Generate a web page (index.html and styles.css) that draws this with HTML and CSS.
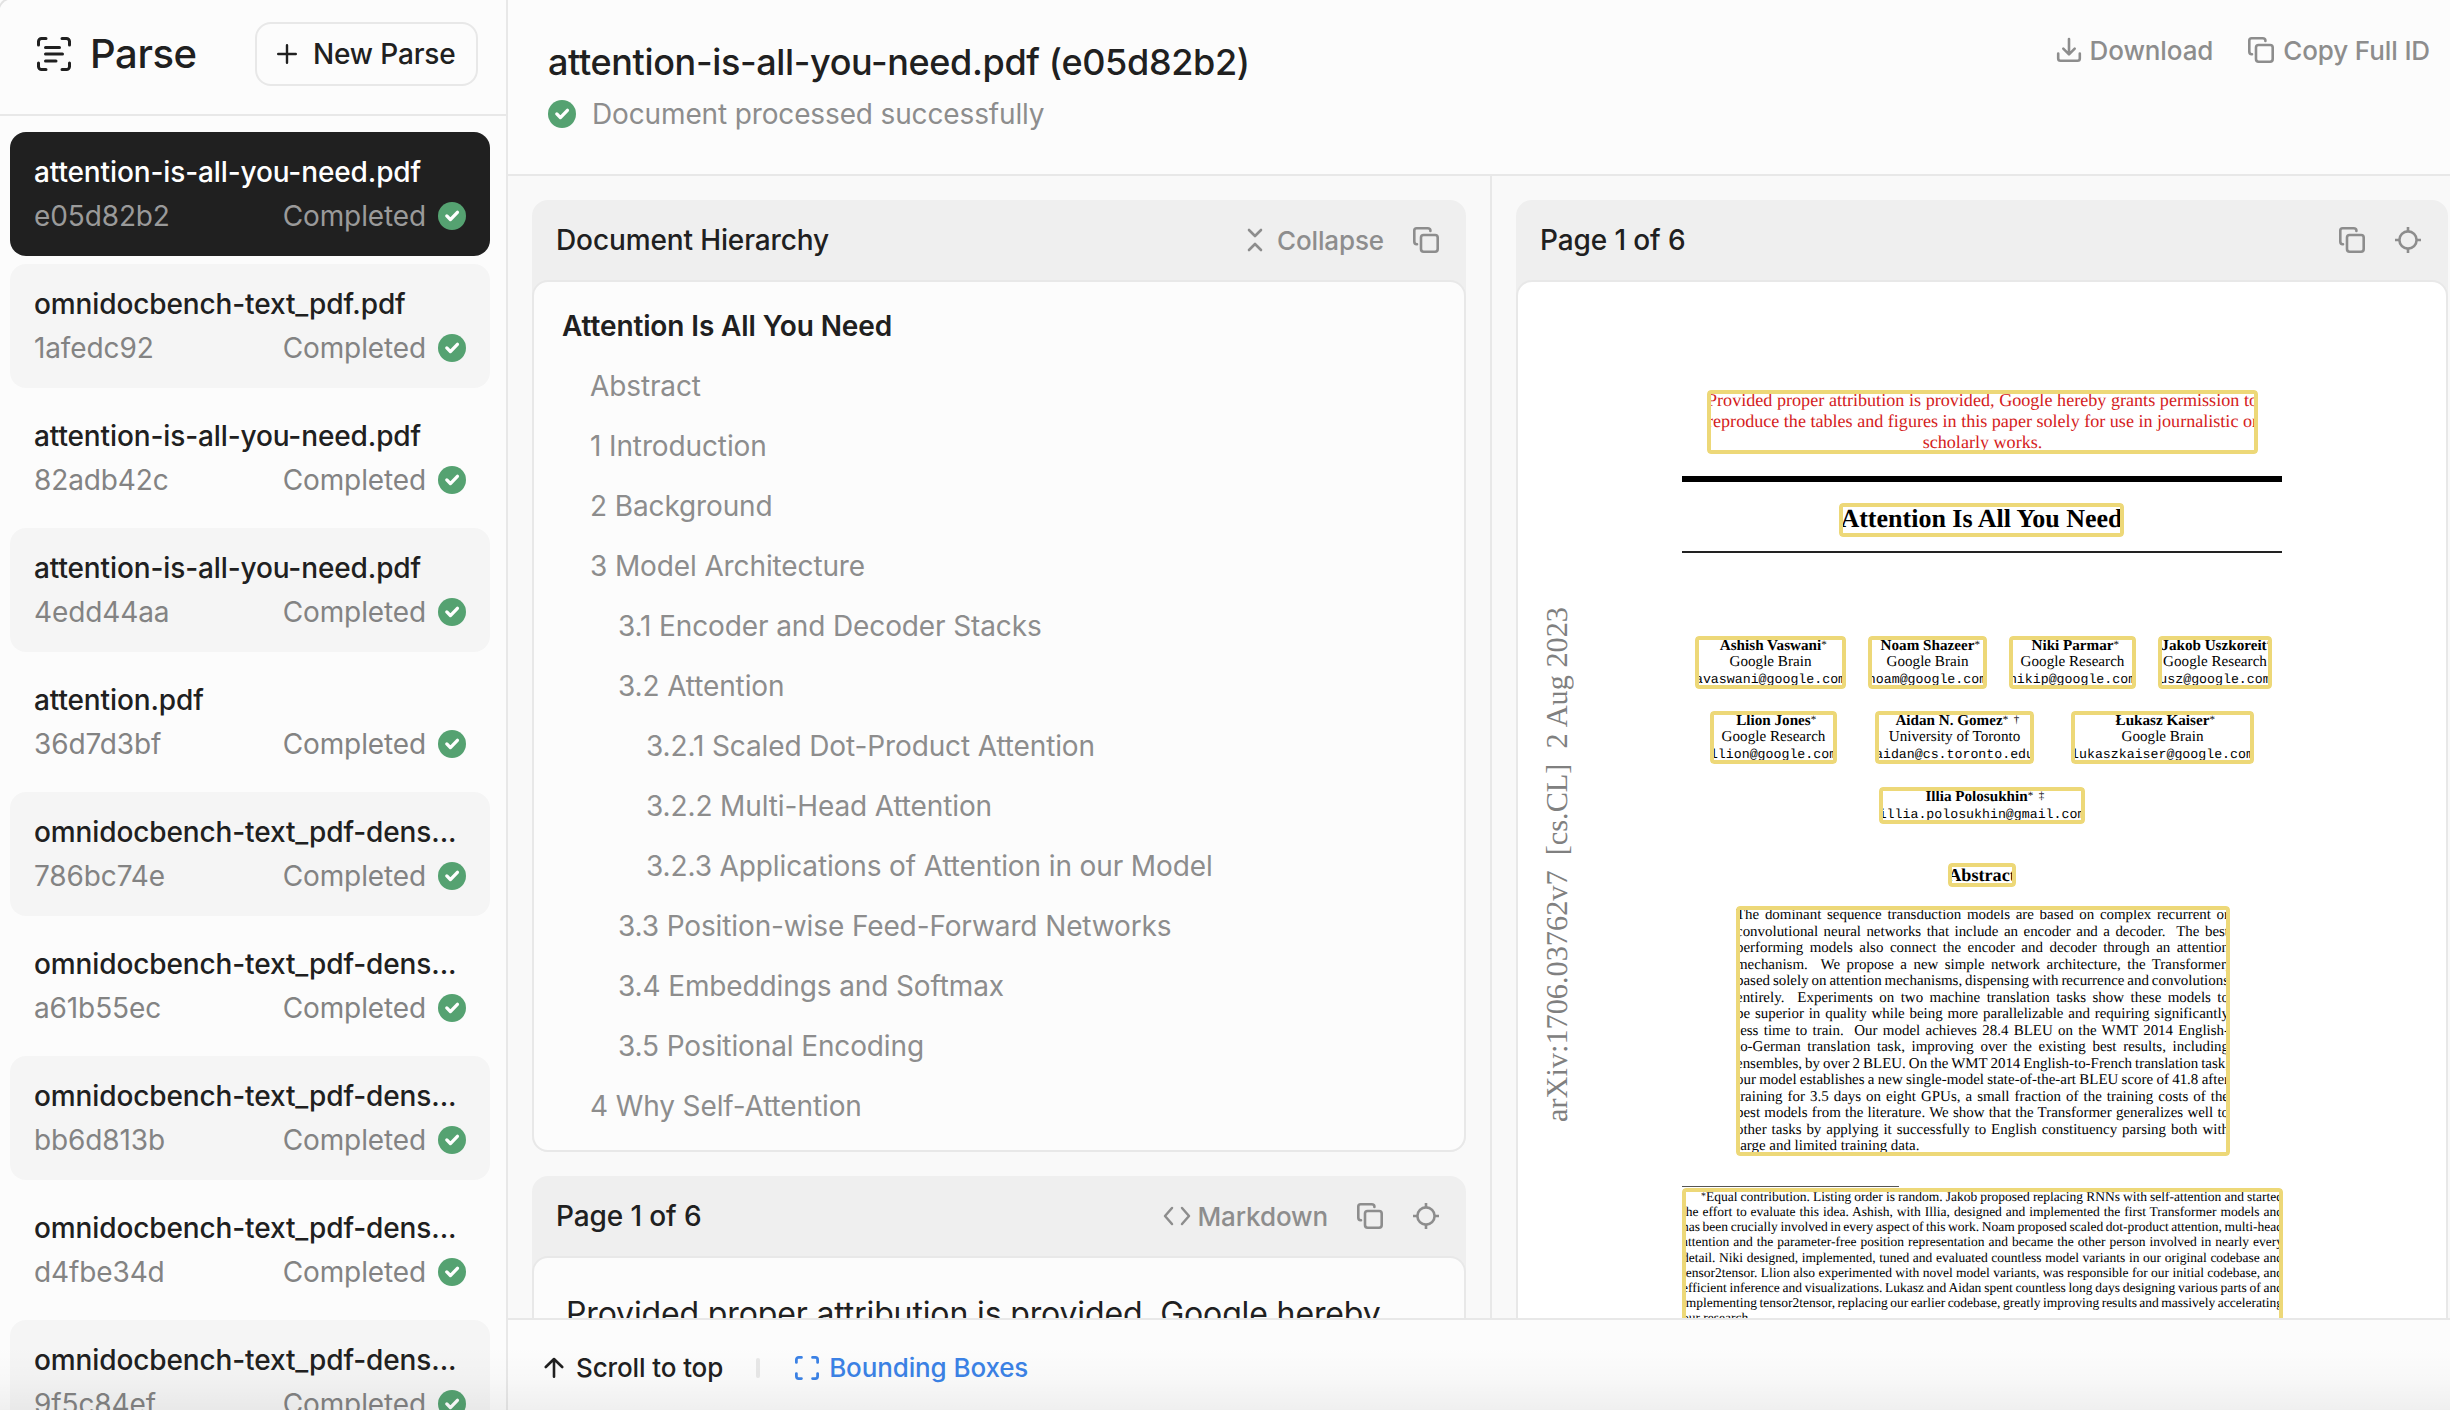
FILE: index.html
```html
<!DOCTYPE html>
<html lang="en">
<head>
<meta charset="utf-8">
<title>Parse</title>
<link rel="stylesheet" href="styles.css">
</head>
<body>
<svg class="defs" width="0" height="0" aria-hidden="true">
  <symbol id="i-check" viewBox="0 0 28 28"><circle cx="14" cy="14" r="14" fill="#55a271"/><path d="M8.8 13.9l3.6 3.7 7-7.3" fill="none" stroke="#fff" stroke-width="3.3" stroke-linecap="round" stroke-linejoin="round"/></symbol>
  <symbol id="i-copy" viewBox="0 0 28 28"><g fill="none" stroke="currentColor" stroke-width="2.6" stroke-linecap="round" stroke-linejoin="round"><rect x="9" y="9" width="16.7" height="16.700" rx="2.6"/><path d="M5 18.200H4.600C3.200 18.200 2.300 17.300 2.300 15.600V4.600C2.300 3.200 3.200 2.300 4.600 2.300h11C17.200 2.300 18.400 3.200 18.400 4.600v.4"/></g></symbol>
  <symbol id="i-target" viewBox="0 0 28 28"><g fill="none" stroke="currentColor" stroke-width="2.6"><circle cx="14" cy="14" r="8.600"/><path d="M14 1v4.300M14 22.700V27M1 14h4.300M22.700 14H27"/></g></symbol>
</svg>
<div class="app">
  <aside class="sidebar">
    <div class="side-head">
      <svg class="logo" viewBox="0 0 36 36"><g fill="none" stroke="#202020" stroke-width="3" stroke-linecap="round" stroke-linejoin="round"><path d="M2.500 9V5.500a3 3 0 0 1 3-3H10M26 2.500h4.500a3 3 0 0 1 3 3V9M33.500 27v3.500a3 3 0 0 1-3 3H26M10 33.500H5.500a3 3 0 0 1-3-3V27"/><path d="M9.500 11.500h14M9.500 18h17M9.500 25h10.500"/></g></svg>
      <h1>Parse</h1>
      <button class="new"><svg viewBox="0 0 20 20"><path d="M10 1.200v17.600M1.200 10h17.600" stroke="#202020" stroke-width="2.400" stroke-linecap="round"/></svg>New Parse</button>
    </div>
    <ul class="jobs">
      <li class="active"><b>attention-is-all-you-need.pdf</b><div><span>e05d82b2</span><span class="st">Completed</span><svg><use href="#i-check"/></svg></div></li>
      <li class="alt"><b>omnidocbench-text_pdf.pdf</b><div><span>1afedc92</span><span class="st">Completed</span><svg><use href="#i-check"/></svg></div></li>
      <li><b>attention-is-all-you-need.pdf</b><div><span>82adb42c</span><span class="st">Completed</span><svg><use href="#i-check"/></svg></div></li>
      <li class="alt"><b>attention-is-all-you-need.pdf</b><div><span>4edd44aa</span><span class="st">Completed</span><svg><use href="#i-check"/></svg></div></li>
      <li><b>attention.pdf</b><div><span>36d7d3bf</span><span class="st">Completed</span><svg><use href="#i-check"/></svg></div></li>
      <li class="alt"><b>omnidocbench-text_pdf-dens...</b><div><span>786bc74e</span><span class="st">Completed</span><svg><use href="#i-check"/></svg></div></li>
      <li><b>omnidocbench-text_pdf-dens...</b><div><span>a61b55ec</span><span class="st">Completed</span><svg><use href="#i-check"/></svg></div></li>
      <li class="alt"><b>omnidocbench-text_pdf-dens...</b><div><span>bb6d813b</span><span class="st">Completed</span><svg><use href="#i-check"/></svg></div></li>
      <li><b>omnidocbench-text_pdf-dens...</b><div><span>d4fbe34d</span><span class="st">Completed</span><svg><use href="#i-check"/></svg></div></li>
      <li class="alt"><b>omnidocbench-text_pdf-dens...</b><div><span>9f5c84ef</span><span class="st">Completed</span><svg><use href="#i-check"/></svg></div></li>
    </ul>
  </aside>
  <main class="main">
    <header class="top">
      <div class="top-left">
        <h2>attention-is-all-you-need.pdf (e05d82b2)</h2>
        <p><svg><use href="#i-check"/></svg>Document processed successfully</p>
      </div>
      <div class="actions">
        <span class="act"><svg class="dl" viewBox="0 0 26 26"><g fill="none" stroke="currentColor" stroke-width="2.600" stroke-linecap="round" stroke-linejoin="round"><path d="M13 2v15M7.300 11.600L13 17.400l5.700-5.800"/><path d="M2.200 16.500v5a2.300 2.300 0 0 0 2.300 2.300h17a2.300 2.300 0 0 0 2.300-2.300v-5"/></g></svg>Download</span>
        <span class="act"><svg class="ic"><use href="#i-copy"/></svg>Copy Full ID</span>
      </div>
    </header>
    <div class="panes">
      <section class="pane left">
        <article class="card">
          <div class="card-head"><h3>Document Hierarchy</h3>
            <span class="tool collapse"><svg viewBox="0 0 18 24"><path d="M3 2l6 6 6-6M3 22L9 16l6 6" fill="none" stroke="currentColor" stroke-width="2.600" stroke-linecap="round" stroke-linejoin="round"/></svg>Collapse</span>
            <svg class="ic"><use href="#i-copy"/></svg>
          </div>
          <div class="card-body tree">
            <div class="l0">Attention Is All You Need</div>
            <div class="l1">Abstract</div>
            <div class="l1">1 Introduction</div>
            <div class="l1">2 Background</div>
            <div class="l1">3 Model Architecture</div>
            <div class="l2">3.1 Encoder and Decoder Stacks</div>
            <div class="l2">3.2 Attention</div>
            <div class="l3">3.2.1 Scaled Dot-Product Attention</div>
            <div class="l3">3.2.2 Multi-Head Attention</div>
            <div class="l3">3.2.3 Applications of Attention in our Model</div>
            <div class="l2">3.3 Position-wise Feed-Forward Networks</div>
            <div class="l2">3.4 Embeddings and Softmax</div>
            <div class="l2">3.5 Positional Encoding</div>
            <div class="l1">4 Why Self-Attention</div>
          </div>
        </article>
        <article class="card">
          <div class="card-head"><h3>Page 1 of 6</h3>
            <span class="tool md"><svg viewBox="0 0 28 20"><path d="M9 2L2 10l7 8M19 2l7 8-7 8" fill="none" stroke="currentColor" stroke-width="2.500" stroke-linecap="round" stroke-linejoin="round"/></svg>Markdown</span>
            <svg class="ic"><use href="#i-copy"/></svg><svg class="ic"><use href="#i-target"/></svg>
          </div>
          <div class="card-body text">Provided proper attribution is provided, Google hereby</div>
        </article>
      </section>
      <section class="pane right">
        <article class="card">
          <div class="card-head"><h3>Page 1 of 6</h3>
            <svg class="ic"><use href="#i-copy"/></svg><svg class="ic"><use href="#i-target"/></svg>
          </div>
          <div class="card-body page">
            <div class="rule thick"></div><div class="rule thin"></div><div class="rule foot"></div>
            <div class="arxiv">arXiv:1706.03762v7&nbsp; [cs.CL]&nbsp; 2 Aug 2023</div>
            <div class="bb notice"><p>Provided proper attribution is provided, Google hereby grants permission to</p><p>reproduce the tables and figures in this paper solely for use in journalistic or</p><p class="c">scholarly works.</p></div>
            <div class="bb title">Attention Is All You Need</div>
            <div class="bb au a1"><b>Ashish Vaswani<i>*</i></b><p>Google Brain</p><code>avaswani@google.com</code></div>
            <div class="bb au a2"><b>Noam Shazeer<i>*</i></b><p>Google Brain</p><code>noam@google.com</code></div>
            <div class="bb au a3"><b>Niki Parmar<i>*</i></b><p>Google Research</p><code>nikip@google.com</code></div>
            <div class="bb au a4"><b>Jakob Uszkoreit<i>*</i></b><p>Google Research</p><code>usz@google.com</code></div>
            <div class="bb au a5"><b>Llion Jones<i>*</i></b><p>Google Research</p><code>llion@google.com</code></div>
            <div class="bb au a6"><b>Aidan N. Gomez<i>*&nbsp; †</i></b><p>University of Toronto</p><code>aidan@cs.toronto.edu</code></div>
            <div class="bb au a7"><b>Łukasz Kaiser<i>*</i></b><p>Google Brain</p><code>lukaszkaiser@google.com</code></div>
            <div class="bb au a8"><b>Illia Polosukhin<i>*&nbsp; ‡</i></b><code>illia.polosukhin@gmail.com</code></div>
            <div class="bb abs-h">Abstract</div>
            <div class="bb abstract">
              <p>The dominant sequence transduction models are based on complex recurrent or</p>
              <p>convolutional neural networks that include an encoder and a decoder.&nbsp; The best</p>
              <p>performing models also connect the encoder and decoder through an attention</p>
              <p>mechanism.&nbsp; We propose a new simple network architecture, the Transformer,</p>
              <p>based solely on attention mechanisms, dispensing with recurrence and convolutions</p>
              <p>entirely.&nbsp; Experiments on two machine translation tasks show these models to</p>
              <p>be superior in quality while being more parallelizable and requiring significantly</p>
              <p>less time to train.&nbsp; Our model achieves 28.4 BLEU on the WMT 2014 English-</p>
              <p>to-German translation task, improving over the existing best results, including</p>
              <p>ensembles, by over 2 BLEU. On the WMT 2014 English-to-French translation task,</p>
              <p>our model establishes a new single-model state-of-the-art BLEU score of 41.8 after</p>
              <p>training for 3.5 days on eight GPUs, a small fraction of the training costs of the</p>
              <p>best models from the literature. We show that the Transformer generalizes well to</p>
              <p>other tasks by applying it successfully to English constituency parsing both with</p>
              <p class="s">large and limited training data.</p>
            </div>
            <div class="bb footnote">
              <p class="first"><sup>*</sup>Equal contribution. Listing order is random. Jakob proposed replacing RNNs with self-attention and started</p>
              <p>the effort to evaluate this idea. Ashish, with Illia, designed and implemented the first Transformer models and</p>
              <p>has been crucially involved in every aspect of this work. Noam proposed scaled dot-product attention, multi-head</p>
              <p>attention and the parameter-free position representation and became the other person involved in nearly every</p>
              <p>detail. Niki designed, implemented, tuned and evaluated countless model variants in our original codebase and</p>
              <p>tensor2tensor. Llion also experimented with novel model variants, was responsible for our initial codebase, and</p>
              <p>efficient inference and visualizations. Lukasz and Aidan spent countless long days designing various parts of and</p>
              <p>implementing tensor2tensor, replacing our earlier codebase, greatly improving results and massively accelerating</p>
              <p class="s">our research.</p>
            </div>
          </div>
        </article>
      </section>
    </div>
    <footer class="bar">
      <span class="up"><svg viewBox="0 0 20 22"><path d="M10 19.800V2M1.800 10L10 2l8.200 8" fill="none" stroke="currentColor" stroke-width="2.600" stroke-linecap="round" stroke-linejoin="round"/></svg>Scroll to top</span>
      <i class="sep"></i>
      <span class="boxes"><svg viewBox="0 0 26 26"><path d="M1.500 7V4a2.500 2.500 0 0 1 2.500-2.500h3M19 1.500h3A2.500 2.500 0 0 1 24.500 4v3M24.500 19v3a2.500 2.500 0 0 1-2.500 2.500h-3M7 24.500H4A2.500 2.500 0 0 1 1.500 22v-3" fill="none" stroke="currentColor" stroke-width="3" stroke-linecap="round"/></svg>Bounding Boxes</span>
    </footer>
  </main>
  <div class="fade"></div>
</div>
</body>
</html>
```
FILE: styles.css
```css
* { box-sizing: border-box; margin: 0; padding: 0; }
body { width: 2450px; height: 1410px; overflow: hidden; background: #fcfcfc; color: #202020; font-family: Inter, "Liberation Sans", sans-serif; font-size: 28px; letter-spacing: -.12px; }
.defs { position: absolute; }
svg { display: block; flex: none; }
.app { display: flex; position: relative; width: 2450px; height: 1410px; overflow: hidden; }
.app::before { content: ""; position: absolute; left: -3px; top: -3px; width: 16px; height: 16px; border: solid #e2e2e2; border-width: 2px 0 0 2px; border-radius: 16px 0 0 0; }

.sidebar { width: 508px; flex: none; border-right: 2px solid #e8e8e8; overflow: hidden; }
.side-head { height: 116px; border-bottom: 2px solid #e8e8e8; display: flex; align-items: center; padding: 0 28px 6px 36px; }
.logo { width: 36px; height: 36px; }
.side-head h1 { font-size: 40px; font-weight: 500; margin-left: 18px; letter-spacing: -.4px; margin-top: -1px; }
.new { margin-left: auto; width: 223px; height: 64px; border: 2px solid #e8e8e8; border-radius: 16px; background: #fcfcfc; color: #202020; font: 500 28px Inter, sans-serif; letter-spacing: -.15px; display: flex; align-items: center; padding-left: 20px; gap: 16px; white-space: nowrap; }
.new svg { width: 20px; height: 20px; }
.jobs { list-style: none; padding: 16px 16px 0 10px; display: flex; flex-direction: column; gap: 8px; }
.jobs li { height: 124px; border-radius: 16px; padding: 18px 24px 0; }
.jobs b { display: block; font-weight: 500; line-height: 44px; white-space: nowrap; }
.jobs li div { display: flex; align-items: center; height: 44px; color: #838383; }
.jobs .st { margin-left: auto; margin-right: 12px; }
.jobs svg { width: 28px; height: 28px; }
.jobs .alt { background: #f5f5f5; }
.jobs .active { background: #202020; color: #fff; }
.jobs .active div { color: #9a9a9a; }

.main { flex: 1; min-width: 0; display: flex; flex-direction: column; }
.top { height: 176px; flex: none; border-bottom: 2px solid #e8e8e8; display: flex; justify-content: space-between; padding: 37px 20px 0 40px; }
.top h2 { font-size: 36px; font-weight: 500; line-height: 50px; white-space: nowrap; letter-spacing: -.36px; }
.top p { display: flex; align-items: center; gap: 16px; color: #8d8d8d; line-height: 40px; margin-top: 7px; letter-spacing: -.14px; }
.top p svg { width: 28px; height: 28px; }
.actions { display: flex; gap: 34px; height: 26px; align-items: center; color: #8d8d8d; font-weight: 500; font-size: 26px; }
.act { display: flex; align-items: center; gap: 8px; }
.dl { width: 26px; height: 26px; }
.ic { width: 28px; height: 28px; }

.panes { flex: 1; min-height: 0; display: flex; background: #f9f9f9; overflow: hidden; }
.pane { padding: 24px; display: flex; flex-direction: column; gap: 24px; }
.left { width: 984px; flex: none; border-right: 2px solid #e8e8e8; }
.right { flex: 1; padding-right: 2px; }
.card { border-radius: 16px; background: #efefef; flex: none; }
.card-head { height: 80px; display: flex; align-items: center; padding: 0 26px 0 24px; gap: 28px; color: #8d8d8d; }
.card-head h3 { font-size: 28px; font-weight: 500; color: #202020; margin-right: auto; }
.tool { display: flex; align-items: center; font-size: 26px; font-weight: 500; }
.collapse svg { width: 18px; height: 24px; margin-right: 13px; }
.md svg { width: 28px; height: 20px; margin-right: 7px; }
.card-body { border: 2px solid #e8e8e8; border-radius: 16px; background: #fcfcfc; }
.tree { height: 872px; padding: 14px 28px; }
.tree div { height: 60px; line-height: 60px; color: #8d8d8d; white-space: nowrap; }
.tree .l0 { font-weight: 600; color: #202020; }
.tree .l1 { padding-left: 28px; }
.tree .l2 { padding-left: 56px; }
.tree .l3 { padding-left: 84px; }
.text { height: 300px; padding: 30px 32px; font-size: 32px; line-height: 52px; white-space: nowrap; letter-spacing: -.14px; }

/* Scanned page: boxes sit at their detected coordinates */
.page { position: relative; height: 1240px; background: #fff; font-family: "Liberation Serif", serif; color: #000; overflow: hidden; letter-spacing: 0; text-rendering: geometricPrecision; }
.page .rule { position: absolute; background: #000; left: 164px; width: 600px; }
.page .thick { top: 194px; height: 6px; }
.page .thin { top: 269px; height: 2px; background: #222; }
.page .foot { top: 904px; height: 1px; width: 217px; background: #555; }
.arxiv { position: absolute; left: 20px; top: 323px; height: 517px; writing-mode: vertical-rl; transform: rotate(180deg); font-size: 30.300px; line-height: 38px; color: #808080; white-space: nowrap; }
.bb { position: absolute; overflow: hidden; white-space: nowrap; border-radius: 4px; }
.bb::after { content: ""; position: absolute; inset: 0; border: 4px solid #edd878; border-radius: 4px; }
.bb p { text-align-last: justify; word-spacing: -1.500px; }
.bb p.c { text-align-last: center; word-spacing: 0; }
.bb p.s { text-align-last: left; word-spacing: 0; }
.notice { left: 189px; top: 108px; width: 551px; height: 64px; font-size: 18.100px; line-height: 21px; color: #d42020; }
.title { left: 321px; top: 221px; width: 285px; height: 34px; font-size: 26px; font-weight: 700; line-height: 32px; text-align: center; }
.au { height: 53px; padding-top: 2px; font-size: 15.150px; line-height: 16.200px; text-align: center; display: flex; flex-direction: column; align-items: center; }
.au b, .au p { position: relative; word-spacing: 0; }
.au i { position: absolute; left: 100%; top: -1px; font: 400 11px/16px "Liberation Serif", serif; }
.au code { font: 13.250px/16.600px "Liberation Mono", monospace; margin-top: 1.500px; }
.a1 { left: 177px; top: 354px; width: 151px; }
.a2 { left: 350px; top: 354px; width: 119px; }
.a3 { left: 491px; top: 354px; width: 127px; }
.a4 { left: 640px; top: 354px; width: 114px; }
.a4 b { margin-right: 2px; }
.a5 { left: 192px; top: 429px; width: 127px; }
.a6 { left: 357px; top: 429px; width: 159px; }
.a7 { left: 553px; top: 429px; width: 183px; }
.a8 { left: 361px; top: 505px; width: 206px; height: 37px; }
.a6 b, .a8 b { margin-right: 11px; }
.abs-h { left: 430px; top: 581px; width: 68px; height: 24px; font-size: 18.200px; font-weight: 700; line-height: 24px; text-align: center; }
.abstract { left: 218px; top: 624px; width: 494px; height: 250px; font-size: 14.950px; line-height: 16.500px; padding: 1px 1px 0 0; }
.footnote { left: 164px; top: 906px; width: 601px; height: 240px; font-size: 13.500px; line-height: 15.150px; padding-top: 1px; }
.footnote .first { padding-left: 19px; }
.footnote sup { font-size: 10px; line-height: 0; vertical-align: 2px; }

.bar { height: 92px; flex: none; border-top: 2px solid #e8e8e8; background: #fcfcfc; display: flex; align-items: center; padding: 5px 36px 0; font-size: 26px; font-weight: 500; }
.bar span { display: flex; align-items: center; }
.up svg { width: 20px; height: 22px; margin-right: 12px; }
.sep { width: 4px; height: 20px; border-radius: 2px; background: #e8e8e8; margin: 0 35px 0 33px; }
.boxes { color: #3b82e6; }
.boxes svg { width: 24px; height: 24px; margin-right: 10px; }
.fade { position: absolute; left: 0; right: 0; bottom: 0; height: 64px; background: linear-gradient(rgba(0,0,0,0), rgba(0,0,0,.015) 50%, rgba(0,0,0,.05)); }
```
